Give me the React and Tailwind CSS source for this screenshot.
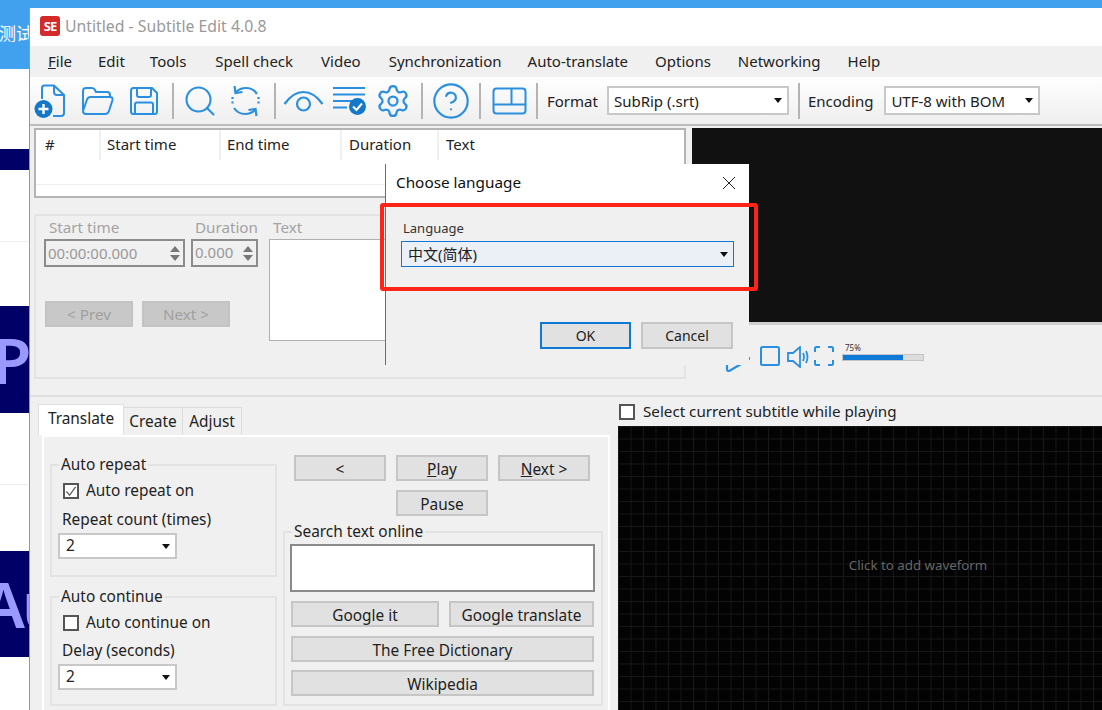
import React from "react";
import { Search, Settings, CircleHelp } from "lucide-react";
import { twMerge } from "tailwind-merge";

const BLUE = "#2b8fe0";

function Caret({ className = "" }) {
  return <span className={`w-0 h-0 border-l-[4.5px] border-r-[4.5px] border-t-[5px] border-l-transparent border-r-transparent border-t-[#111] ${className}`} />;
}

function Select({ value, className = "", textClass = "" }) {
  return (
    <div className={twMerge("flex items-center justify-between bg-white border-2 border-[#c8c8c8] pl-[6px] pr-[5px]", className)}>
      <span className={textClass}>{value}</span>
      <Caret />
    </div>
  );
}

function Btn({ children, className = "" }) {
  return <div className={twMerge("flex items-center justify-center h-[26px] bg-[#e1e1e1] border-2 border-[#c6c6c6] text-[#222]", className)}>{children}</div>;
}

function Sep({ className = "" }) {
  return <div className={`w-[2px] h-[36px] bg-[#b4b4b4] shrink-0 ${className}`} />;
}

function Group({ label, className = "", children }) {
  return (
    <div className={`relative border-2 border-[#e3e3e3] ${className}`}>
      <span className="absolute -top-[12px] left-[7px] bg-[#f0f0f0] px-[2px] leading-[22px] text-[#222]">{label}</span>
      {children}
    </div>
  );
}

function Check({ checked, className = "" }) {
  return (
    <span className={`flex items-center justify-center w-[16px] h-[16px] bg-white border-2 border-[#555] shrink-0 ${className}`}>
      {checked && (
        <svg width="13" height="13" viewBox="0 0 13 13" fill="none" stroke="#666" strokeWidth="1.5"><path d="M1.5 6.5 L5 10.5 L11.5 1.5" /></svg>
      )}
    </span>
  );
}

function Spin({ value, className = "", textClass = "" }) {
  return (
    <div className={`flex items-center justify-between border-2 border-[#8c8c8c] pl-[2px] pr-[3px] text-[#999] ${className}`}>
      <span className={textClass}>{value}</span>
      <span className="flex flex-col gap-[3px]">
        <span className="w-0 h-0 border-l-[5px] border-r-[5px] border-b-[6px] border-l-transparent border-r-transparent border-b-[#777]" />
        <span className="w-0 h-0 border-l-[5px] border-r-[5px] border-t-[6px] border-l-transparent border-r-transparent border-t-[#777]" />
      </span>
    </div>
  );
}

function IconNew() {
  return (
    <svg className="ml-[4px] shrink-0" width="32" height="34" viewBox="0 0 32 34" fill="none" stroke={BLUE} strokeWidth="2">
      <path d="M8 15 V4 Q8 1.5 10.5 1.5 H20 L30 11 V29 Q30 32 27 32 H19" />
      <path d="M20 2 V8 Q20 11 23 11 H30" />
      <circle cx="9.5" cy="25" r="9" fill="#1478c8" stroke="none" />
      <path d="M9.5 20 V30 M4.5 25 H14.5" stroke="#fff" strokeWidth="2.4" />
    </svg>
  );
}
function IconOpen() {
  return (
    <svg className="ml-[15px] shrink-0" width="33" height="30" viewBox="0 0 33 30" fill="none" stroke={BLUE} strokeWidth="2">
      <path d="M2 24 V5 Q2 2 5 2 H11 Q13 2 14 4 L15 6 H26 Q29 6 29 9 V11" />
      <path d="M2 25 L6 13.5 Q7 11 9.5 11 H29 Q32 11 31.5 14 L28 25 Q27 28 24 28 H5 Q2 28 2 25 Z" />
    </svg>
  );
}
function IconSave() {
  return (
    <svg className="ml-[15px] shrink-0" width="30" height="30" viewBox="0 0 30 30" fill="none" stroke={BLUE} strokeWidth="2">
      <path d="M2 4.5 Q2 2 4.5 2 H23 L28 7 V25.5 Q28 28 25.5 28 H4.5 Q2 28 2 25.5 Z" />
      <path d="M8 2 V9 Q8 11 10 11 H20 Q22 11 22 9 V2" />
      <path d="M6 28 V18.5 Q6 16.5 8 16.5 H22 Q24 16.5 24 18.5 V28" />
    </svg>
  );
}
function IconSync() {
  return (
    <svg className="ml-[12px] shrink-0" width="31" height="34" viewBox="0 0 31 34" fill="none" stroke={BLUE} strokeWidth="2.2">
      <path d="M6 8 Q10 4 16 4 Q23 4 27 10" />
      <path d="M4.5 2 L5.5 9 L12.5 8" />
      <path d="M25 26 Q21 30 15 30 Q8 30 4 24" />
      <path d="M26.5 32 L25.5 25 L18.5 26" />
      <path d="M2.5 13 V21 M28.5 13 V21" strokeDasharray="2 2.4" />
    </svg>
  );
}
function IconEye() {
  return (
    <svg className="ml-[7px] shrink-0" width="41" height="24" viewBox="0 0 41 24" fill="none" stroke={BLUE} strokeWidth="2.2">
      <path d="M1.5 15 Q10 3 20.5 3 Q31 3 39.5 15" />
      <circle cx="20.5" cy="15" r="6.5" />
    </svg>
  );
}
function IconList() {
  return (
    <svg className="ml-[8px] shrink-0" width="35" height="30" viewBox="0 0 35 30" fill="none" stroke={BLUE} strokeWidth="2">
      <path d="M1 2 H33 M1 8.5 H33 M1 15 H22 M1 21.5 H15" />
      <circle cx="25.5" cy="20.5" r="8.5" fill="#1478c8" stroke="none" />
      <path d="M21 20.5 L24.5 24 L30 17.5" stroke="#fff" strokeWidth="2" />
    </svg>
  );
}
function IconLayout() {
  return (
    <svg className="ml-[11px] shrink-0" width="35" height="28" viewBox="0 0 35 28" fill="none" stroke={BLUE} strokeWidth="2">
      <rect x="1.5" y="1.5" width="32" height="25" rx="3" />
      <path d="M1.5 17.5 H33.5 M19.5 1.5 V17.5" />
    </svg>
  );
}

function Player() {
  return (
    <div className="relative flex-1 bg-[#f0f0f0] border-t-[3px] border-[#cfcfcf]">
      <div className="flex items-start pl-[32px] pt-[21px]">
        <svg className="mt-[8px] shrink-0" width="28" height="20" viewBox="0 0 28 20" fill="none" stroke={BLUE} strokeWidth="2.2" style={{ marginRight: "-5px" }}>
          <path d="M3 10 V15 Q3 18 6 16.5 L24 6 Q26 4.5 24 3" />
        </svg>
        <svg className="ml-[13px] shrink-0" width="20" height="20" viewBox="0 0 20 20" fill="none" stroke={BLUE} strokeWidth="2">
          <rect x="1" y="1" width="18" height="18" rx="1.5" />
        </svg>
        <svg className="ml-[7px] shrink-0" width="22" height="22" viewBox="0 0 22 22" fill="none" stroke={BLUE} strokeWidth="1.8">
          <path d="M1 7 H6 L13 1 V21 L6 15 H1 Z" />
          <path d="M16 7 Q18 11 16 15 M19 5 Q22 11 19 17" />
        </svg>
        <svg className="ml-[5px] shrink-0" width="20" height="20" viewBox="0 0 20 20" fill="none" stroke={BLUE} strokeWidth="2">
          <path d="M1 6 V2.5 Q1 1 2.5 1 H6 M14 1 H17.5 Q19 1 19 2.5 V6 M19 14 V17.5 Q19 19 17.5 19 H14 M6 19 H2.5 Q1 19 1 17.5 V14" />
        </svg>
        <div className="ml-[8px] w-[82px] shrink-0 -mt-[3px]">
          <div className="text-[8px] leading-[10px] pl-[3px] text-[#333]">75%</div>
          <div className="mt-[1px] h-[7px] bg-[#dcdcdc] border border-[#c4c4c4]">
            <div className="h-full w-[75%] bg-[#0f7ad8]" />
          </div>
        </div>
      </div>
    </div>
  );
}

export default function App() {
  const font = { fontFamily: '"Noto Sans", "Noto Sans CJK SC", sans-serif' };
  return (
    <div className="relative w-[1102px] h-[710px] overflow-hidden bg-white text-[15px] text-[#222]" style={font}>
      {/* Desktop behind the window */}
      <div className="h-[8px] bg-[#42a1ee]" />
      <div className="w-[30px] h-[61px] bg-[#42a1ee] text-white text-[17px] leading-[50px] overflow-hidden whitespace-nowrap" style={{ fontFamily: '"Noto Sans CJK SC", sans-serif' }}><span className="inline-block -ml-[1px]">测试</span></div>
      <div className="w-[30px] h-[80px]" />
      <div className="w-[30px] h-[21px] bg-[#000066]" />
      <div className="w-[30px] h-[72px] border-b border-[#eee]" />
      <div className="w-[30px] h-[64px]" />
      <div className="w-[30px] h-[107px] bg-[#000066] text-[#9999ff] text-[64px] leading-[107px] font-semibold overflow-hidden"><span className="inline-block -ml-[8px]">P</span></div>
      <div className="w-[30px] h-[72px] border-b border-[#eee]" />
      <div className="w-[30px] h-[66px]" />
      <div className="w-[30px] h-[106px] bg-[#000066] text-[#9999ff] text-[64px] leading-[106px] font-semibold overflow-hidden whitespace-nowrap tracking-[-3px]"><span className="inline-block -ml-[18px]">Au</span></div>

      {/* Main window */}
      <div className="absolute left-[29px] top-[8px] w-[1073px] h-[702px] flex flex-col bg-[#f0f0f0] border-l border-[#8a9aa8]">
        <div className="h-[38px] shrink-0 bg-white flex items-center pl-[10px] pb-[2px] text-[#999]">
          <span className="flex items-center justify-center w-[20px] h-[20px] rounded-[3px] bg-[#d42a2a] text-white text-[13px] leading-none font-bold tracking-[-1px]">SE</span>
          <span className="ml-[5px] mt-[2px] text-[15.8px]">Untitled - Subtitle Edit 4.0.8</span>
        </div>
        <div className="h-[31px] shrink-0 flex items-center pl-[18px] bg-[#f0f0f0]">
          <span><span className="underline">F</span>ile</span>
          <span className="ml-[26px]">Edit</span>
          <span className="ml-[25px]">Tools</span>
          <span className="ml-[29px]">Spell check</span>
          <span className="ml-[28px]">Video</span>
          <span className="ml-[28px]">Synchronization</span>
          <span className="ml-[26px]">Auto-translate</span>
          <span className="ml-[27px]">Options</span>
          <span className="ml-[27px]">Networking</span>
          <span className="ml-[27px]">Help</span>
        </div>
        <div className="h-[49px] shrink-0 flex items-center bg-gradient-to-b from-white to-[#eeeeee] border-b-2 border-[#bdbdbd]">
          <IconNew />
          <IconOpen />
          <IconSave />
          <Sep className="ml-[13px]" />
          <Search className="ml-[8px] shrink-0" size={36} color={BLUE} strokeWidth={1.4} />
          <IconSync />
          <Sep className="ml-[13px]" />
          <IconEye />
          <IconList />
          <Settings className="ml-[8px] shrink-0" size={36} color={BLUE} strokeWidth={1.5} />
          <Sep className="ml-[10px]" />
          <CircleHelp className="ml-[8px] shrink-0" size={40} color={BLUE} strokeWidth={1.3} />
          <Sep className="ml-[8px]" />
          <IconLayout />
          <Sep className="ml-[9px]" />
          <span className="ml-[9px] mt-[2px]">Format</span>
          <Select value="SubRip (.srt)" className="ml-[9px] w-[182px] h-[29px]" textClass="pt-[1px] -ml-[1px]" />
          <Sep className="ml-[9px]" />
          <span className="ml-[8px] mt-[2px]">Encoding</span>
          <Select value="UTF-8 with BOM" className="ml-[11px] w-[156px] h-[29px]" textClass="pt-[1px] -ml-[1px]" />
        </div>

        {/* Top row: list + edit / video + player */}
        <div className="h-[271px] shrink-0 flex border-b-2 border-[#dedede]">
          <div className="w-[662px] shrink-0 pl-[4px] pt-[2px]">
            <div className="w-[652px] h-[70px] bg-white border-2 border-[#b4b4b4]">
              <div className="flex h-[30px] items-center">
                <div className="w-[65px] pl-[9px] pb-[2px] h-full flex items-center border-r-2 border-[#f0f0f0]">#</div>
                <div className="w-[120px] pl-[6px] pb-[2px] h-full flex items-center border-r-2 border-[#f0f0f0]">Start time</div>
                <div className="w-[121px] pl-[6px] pb-[2px] h-full flex items-center border-r-2 border-[#f0f0f0]">End time</div>
                <div className="w-[97px] pl-[7px] pb-[2px] h-full flex items-center border-r-2 border-[#f0f0f0]">Duration</div>
                <div className="pl-[7px] pb-[2px]">Text</div>
              </div>
              <div className="mt-[24px] border-t border-[#eeeeee]" />
            </div>
            <div className="mt-[16px] w-[652px] h-[165px] border-2 border-[#e3e3e3] pl-[8px] pt-[3px] flex text-[#a3a3a3] text-[15.2px]">
              <div className="w-[141px] shrink-0">
                <div className="pl-[5px] leading-[20px] h-[20px] -mt-[2px] mb-[2px]">Start time</div>
                <Spin value="00:00:00.000" className="h-[28px] w-[141px] text-[15px]" />
                <Btn className="mt-[34px] ml-[1px] w-[88px] bg-[#c8c8c8] border-[#c3c3c3] text-[#a0a0a0]">&lt; Prev</Btn>
              </div>
              <div className="w-[67px] ml-[6px] shrink-0">
                <div className="pl-[4px] leading-[20px] h-[20px] -mt-[2px] mb-[2px] whitespace-nowrap">Duration</div>
                <Spin value="0.000" className="h-[28px] w-[67px] text-[15px]" textClass="-mt-[2px]" />
                <Btn className="mt-[34px] -ml-[49px] w-[88px] bg-[#c8c8c8] border-[#c3c3c3] text-[#a0a0a0]">Next &gt;</Btn>
              </div>
              <div className="ml-[11px] flex-1">
                <div className="pl-[4px] leading-[20px] h-[20px] -mt-[2px] mb-[2px]">Text</div>
                <div className="h-[102px] w-[300px] bg-white border border-[#b0b0b0]" />
              </div>
            </div>
          </div>
          <div className="flex-1 flex flex-col pt-[2px]">
            <div className="h-[194px] shrink-0 bg-[#111111]" />
            <Player />
          </div>
        </div>

        {/* Bottom row: tabs / waveform */}
        <div className="flex-1 min-h-0 flex">
          <div className="w-[588px] shrink-0 pl-[8px] pt-[6px] text-[15.4px] leading-[24px]">
            <div className="flex items-end h-[32px]">
              <div className="w-[86px] h-[31px] bg-white flex items-center justify-center border border-b-0 border-[#e0e0e0] pb-[3px]">Translate</div>
              <div className="w-[59px] h-[28px] flex items-center justify-center border border-l-0 border-b-0 border-[#dcdcdc]">Create</div>
              <div className="w-[59px] h-[28px] flex items-center justify-center border border-l-0 border-b-0 border-[#dcdcdc]">Adjust</div>
            </div>
            <div className="ml-[4px] w-[568px] h-[276px] border-t-2 border-l-2 border-r-2 border-white flex pl-[6px]">
              <div className="w-[227px] shrink-0 pt-[27px]">
                <Group label="Auto repeat" className="h-[113px] w-[227px]">
                  <label className="flex items-center gap-[7px] ml-[11px] mt-[15px] leading-[20px]"><Check checked />Auto repeat on</label>
                  <div className="ml-[10px] mt-[8px] leading-[22px]">Repeat count (times)</div>
                  <Select value="2" className="ml-[6px] mt-[2px] w-[119px] h-[26px]" />
                </Group>
                <Group label="Auto continue" className="mt-[19px] h-[110px] w-[227px]">
                  <label className="flex items-center gap-[7px] ml-[11px] mt-[15px] leading-[20px]"><Check />Auto continue on</label>
                  <div className="ml-[10px] mt-[7px] leading-[22px]">Delay (seconds)</div>
                  <Select value="2" className="ml-[6px] mt-[2px] w-[119px] h-[26px]" />
                </Group>
              </div>
              <div className="ml-[6px] w-[320px] shrink-0 pt-[18px]">
                <div className="flex gap-[10px] pl-[11px]">
                  <Btn className="w-[92px] pt-[4px]">&lt;</Btn>
                  <Btn className="w-[92px] pt-[4px]"><span><span className="underline">P</span>lay</span></Btn>
                  <Btn className="w-[92px] pt-[4px]"><span><span className="underline">N</span>ext &gt;</span></Btn>
                </div>
                <div className="pl-[113px] mt-[9px]"><Btn className="w-[92px] pt-[4px]">Pause</Btn></div>
                <Group label="Search text online" className="mt-[15px] w-[320px] h-[175px] pt-[11px] pl-[5px]">
                  <div className="w-[305px] h-[48px] bg-white border-2 border-[#8a8a8a]" />
                  <div className="flex gap-[10px] mt-[9px] pl-[1px]">
                    <Btn className="w-[148px] pt-[4px]">Google it</Btn>
                    <Btn className="w-[145px] pt-[4px]">Google translate</Btn>
                  </div>
                  <Btn className="mt-[9px] ml-[1px] w-[303px] pt-[4px]">The Free Dictionary</Btn>
                  <Btn className="mt-[8px] ml-[1px] w-[303px] pt-[4px]">Wikipedia</Btn>
                </Group>
              </div>
            </div>
          </div>
          <div className="flex-1 flex flex-col text-[15.2px]">
            <label className="flex items-center gap-[8px] h-[29px] pl-[1px]"><Check />Select current subtitle while playing</label>
            <div className="flex-1 flex items-center justify-center pl-[116px] pb-[4px] bg-[#030303] bg-[linear-gradient(#171717_1px,transparent_1px),linear-gradient(90deg,#171717_1px,transparent_1px)] bg-[size:12.5px_12.5px] text-[#666] text-[13.3px]">
              Click to add waveform
            </div>
          </div>
        </div>
      </div>

      {/* Dialog */}
      <div className="absolute left-[385px] top-[164px] w-[364px] h-[201px] bg-[#f0f0f0] border-l border-[#6d6d6d] flex flex-col">
        <div className="h-[40px] shrink-0 bg-white flex items-center justify-between pl-[10px] pr-[13px] pb-[3px] text-[#111] text-[15.3px]">
          <span>Choose language</span>
          <svg width="14" height="14" viewBox="0 0 14 14" stroke="#222" strokeWidth="1" fill="none"><path d="M1 1 L13 13 M13 1 L1 13" /></svg>
        </div>
        <div className="pl-[15px] pt-[14px]">
          <div className="pl-[2px] text-[13px] leading-[20px] text-[#333]">Language</div>
          <Select value="中文(简体)" className="mt-[3px] w-[333px] h-[26px] border border-[#0f78d4] bg-[#eaf0f6]" />
        </div>
        <div className="flex gap-[10px] pl-[154px] mt-[55px]">
          <Btn className="w-[91px] h-[27px] border-[#0f78d4] text-[14px]">OK</Btn>
          <Btn className="w-[92px] h-[27px] text-[14px]">Cancel</Btn>
        </div>
      </div>

      {/* Red annotation */}
      <div className="absolute left-[380px] top-[203px] w-[378px] h-[88px] border-[4px] border-[#ff2418] rounded-[3px]" />
    </div>
  );
}
